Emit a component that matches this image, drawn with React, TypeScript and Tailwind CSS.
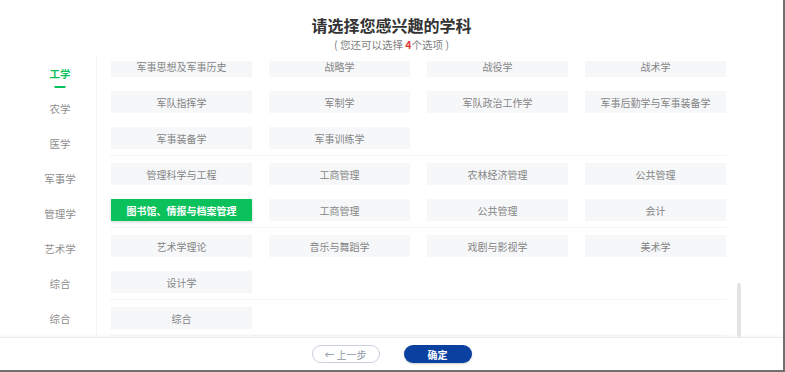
import React from "react";

const groups: { items: string[] }[] = [
  {
    items: [
      "军事思想及军事历史",
      "战略学",
      "战役学",
      "战术学",
      "军队指挥学",
      "军制学",
      "军队政治工作学",
      "军事后勤学与军事装备学",
      "军事装备学",
      "军事训练学",
    ],
  },
  {
    items: [
      "管理科学与工程",
      "工商管理",
      "农林经济管理",
      "公共管理",
      "图书馆、情报与档案管理",
      "工商管理",
      "公共管理",
      "会计",
    ],
  },
  { items: ["艺术学理论", "音乐与舞蹈学", "戏剧与影视学", "美术学", "设计学"] },
  { items: ["综合"] },
];

const side = ["工学", "农学", "医学", "军事学", "管理学", "艺术学", "综合", "综合"];

export default function App() {
  return (
    <div
      className="w-[785px] h-[372px] bg-white flex flex-col border-r-2 border-b-2 border-[#707070] overflow-hidden"
      style={{ fontFamily: '"Noto Sans CJK SC", "Noto Sans", sans-serif' }}
    >
      <div className="h-[56px] flex flex-col items-center pt-[15px] shrink-0">
        <div className="text-[16px] leading-[20px] font-bold text-[#333]">请选择您感兴趣的学科</div>
        <div className="mt-[3px] text-[10.5px] leading-[14px] text-[#808080]">
          ( 您还可以选择 <span className="text-[#e53935] font-bold">4</span>个选项 )
        </div>
      </div>
      <div className="flex h-[281px] shrink-0">
        <div className="w-[97px] shrink-0 flex flex-col pl-[24px] border-r border-[#f5f5f5]">
          {side.map((s, i) => (
            <div
              key={i}
              className={
                "relative h-[35px] flex items-center justify-center text-[10.5px] " +
                (i === 0 ? "text-[#0bc15c] font-bold" : "text-[#8e8e8e]")
              }
            >
              {s}
              {i === 0 && (
                <div className="absolute bottom-[3px] left-1/2 -translate-x-1/2 w-[11px] h-[2px] bg-[#0bc15c]" />
              )}
            </div>
          ))}
        </div>
        <div className="flex-1 flex flex-col pt-[5px]">
          <div className="relative flex-1 overflow-hidden">
            <div className="mt-[-13px] pl-[14px]">
              {groups.map((g, gi) => (
                <div
                  key={gi}
                  className="w-[615px] pt-[7px] pb-[6px] border-b border-dotted border-[#ebebeb] grid grid-cols-[repeat(4,141px)] gap-x-[17px] gap-y-[14px]"
                >
                  {g.items.map((t, ti) =>
                    t === "图书馆、情报与档案管理" ? (
                      <div
                        key={ti}
                        className="h-[22px] flex items-center justify-center bg-[#0bc15c] text-white font-bold text-[10px] shadow-[0_1px_3px_rgba(0,0,0,0.18)]"
                      >
                        {t}
                      </div>
                    ) : (
                      <div
                        key={ti}
                        className="h-[22px] flex items-center justify-center bg-[#f6f7f9] text-[#858585] text-[10px]"
                      >
                        {t}
                      </div>
                    )
                  )}
                </div>
              ))}
            </div>
            <div className="absolute right-[42px] bottom-0 w-[4px] h-[54px] rounded-full bg-[#e3e3e3]" />
          </div>
        </div>
      </div>
      <div className="flex-1 border-t border-[#ececec] shadow-[0_-2px_4px_rgba(0,0,0,0.03)] flex items-center justify-center gap-[24px]">
        <div className="w-[68px] h-[18px] rounded-full border border-[#c9d1dc] flex items-center justify-center text-[10px] text-[#8c98a8]">
          ←&nbsp;上一步
        </div>
        <div className="w-[68px] h-[18px] rounded-full bg-[#0a409f] flex items-center justify-center text-[10px] font-bold text-white shadow-[0_1px_2px_rgba(0,0,0,0.2)]">
          确定
        </div>
      </div>
    </div>
  );
}
